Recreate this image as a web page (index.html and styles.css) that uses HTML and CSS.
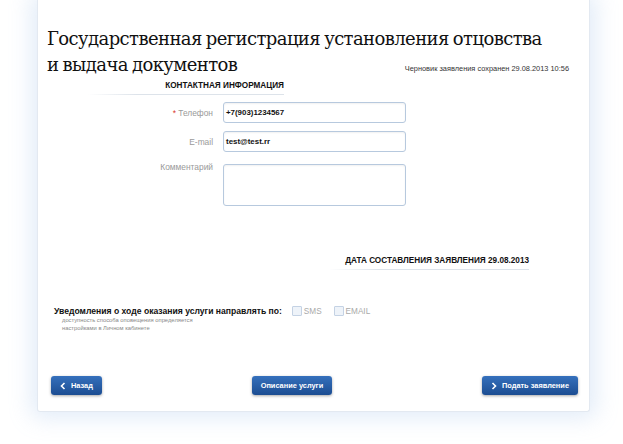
FILE: index.html
```html
<!DOCTYPE html>
<html lang="ru">
<head>
    <meta charset="UTF-8">
    <title>Государственная регистрация установления отцовства</title>
    <link rel="stylesheet" href="styles.css">
</head>
<body>
    <div class="card">
        <div class="page-head">
            <h1>Государственная регистрация установления отцовства<br>и выдача документов</h1>
            <div class="draft-note">Черновик заявления сохранен 29.08.2013 10:56</div>
        </div>

        <div class="section-title contact-title">КОНТАКТНАЯ ИНФОРМАЦИЯ</div>

        <div class="form-grid">
            <label class="field-label"><span class="req">*</span> Телефон</label>
            <div class="input">+7(903)1234567</div>

            <label class="field-label">E-mail</label>
            <div class="input">test@test.rr</div>

            <label class="field-label top">Комментарий</label>
            <div class="input textarea"></div>
        </div>

        <div class="section-title date-title">ДАТА СОСТАВЛЕНИЯ ЗАЯВЛЕНИЯ 29.08.2013</div>

        <div class="notify">
            <div class="notify-row">
                <span class="notify-label">Уведомления о ходе оказания услуги направлять по:</span>
                <span class="check"><span class="box"></span>SMS</span>
                <span class="check"><span class="box"></span>EMAIL</span>
            </div>
            <div class="notify-hint">доступность способа оповещения определяется<br>настройками в Личном кабинете</div>
        </div>

        <div class="actions">
            <a href="#" class="btn">
                <svg width="6" height="8" viewBox="0 0 6 8"><path d="M4.5 1 L1.5 4 L4.5 7" fill="none" stroke="#fff" stroke-width="1.6"/></svg>
                Назад
            </a>
            <a href="#" class="btn">Описание услуги</a>
            <a href="#" class="btn">
                <svg width="6" height="8" viewBox="0 0 6 8"><path d="M1.5 1 L4.5 4 L1.5 7" fill="none" stroke="#fff" stroke-width="1.6"/></svg>
                Подать заявление
            </a>
        </div>
    </div>
</body>
</html>
```

FILE: styles.css
```css
* { margin: 0; padding: 0; box-sizing: border-box; }

body {
    width: 623px;
    height: 444px;
    overflow: hidden;
    background: #fff;
    font-family: "Liberation Sans", Arial, "DejaVu Sans", sans-serif;
    padding: 0 33px 0 37px;
}

.card {
    width: 553px;
    height: 412px;
    background: #fff;
    border: 1px solid #e3e9f1;
    border-top: none;
    border-radius: 0 0 3px 3px;
    box-shadow: 0 0 22px 6px rgba(150, 185, 230, 0.28);
    padding: 26px 10px 0 9px;
    display: flex;
    flex-direction: column;
}

.page-head {
    display: grid;
    grid-template-columns: minmax(0, 1fr);
}

.page-head h1,
.draft-note {
    grid-area: 1 / 1;
}

.page-head h1 {
    font-family: "DejaVu Serif", serif;
    font-weight: normal;
    font-size: 18px;
    letter-spacing: -0.6px;
    word-spacing: -1px;
    line-height: 26px;
    color: #111;
    white-space: nowrap;
}

.draft-note {
    justify-self: end;
    align-self: end;
    font-size: 7.4px;
    color: #333;
    margin-bottom: 5px;
    margin-right: 10px;
}

.section-title {
    font-size: 8.2px;
    font-weight: bold;
    color: #111;
    text-align: right;
    padding-bottom: 4px;
}

.section-title::after {
    content: "";
    display: block;
    height: 1px;
    margin-top: 4px;
    background: linear-gradient(to right, rgba(215, 222, 232, 0), #dde3ea 25%, #dde3ea);
}

.contact-title {
    margin: 3px 0 0 41px;
    width: 196px;
}

.form-grid {
    display: grid;
    grid-template-columns: 166px 183px;
    column-gap: 10px;
    row-gap: 8px;
    margin-top: 3px;
}

.field-label {
    text-align: right;
    font-size: 8.4px;
    color: #9a9a9a;
    align-self: center;
}

.field-label.top {
    align-self: start;
    padding-top: 2px;
}

.req {
    color: #d9362b;
}

.input {
    height: 21px;
    border: 1px solid #b7c9de;
    border-radius: 3px;
    box-shadow: inset 0 1px 2px rgba(0, 0, 0, 0.06);
    font-size: 7.9px;
    font-weight: bold;
    color: #111;
    padding: 0 2px;
    display: flex;
    align-items: center;
}

.input.textarea {
    height: 42px;
    margin-top: 4px;
}

.date-title {
    margin: 50px 0 0 282px;
    width: 200px;
}

.notify {
    margin: 32px 0 0 7px;
}

.notify-row {
    display: flex;
    align-items: center;
}

.notify-label {
    font-size: 8.6px;
    font-weight: bold;
    color: #111;
    margin-right: 10px;
}

.check {
    display: flex;
    align-items: center;
    font-size: 8.2px;
    color: #a9a9a9;
    margin-right: 12px;
}

.box {
    width: 10px;
    height: 10px;
    border: 1px solid #c4d2e4;
    background: #eef3f9;
    border-radius: 1px;
    margin-right: 2px;
}

.notify-hint {
    font-size: 5.8px;
    line-height: 8px;
    color: #888;
    margin: 0 0 0 8px;
}

.actions {
    display: flex;
    justify-content: space-between;
    margin: 44px 1px 0 4px;
}

.btn {
    display: flex;
    align-items: center;
    gap: 5px;
    height: 19px;
    padding: 0 9px;
    background: linear-gradient(#3570bc, #1c4d92);
    border-radius: 3px;
    box-shadow: 0 1px 3px rgba(0, 0, 0, 0.35);
    color: #fff;
    font-size: 7.4px;
    font-weight: bold;
    text-decoration: none;
}
```
